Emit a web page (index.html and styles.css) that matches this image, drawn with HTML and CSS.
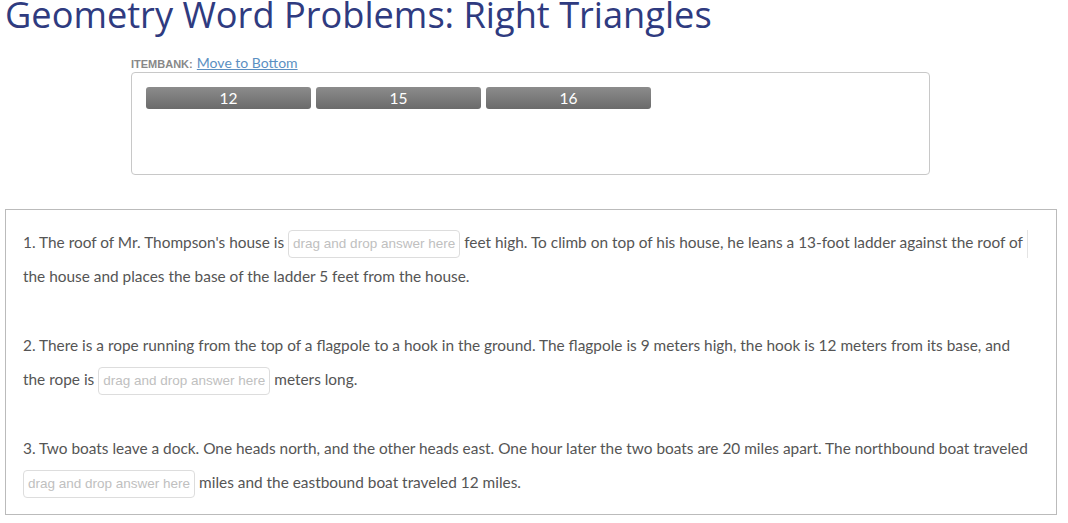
FILE: index.html
```html
<!DOCTYPE html>
<html>
<head>
<meta charset="utf-8">
<link rel="stylesheet" href="styles.css">
</head>
<body>
<h1 class="title">Geometry Word Problems: Right Triangles</h1>
<div class="bank">
  <div class="bank-head"><span class="bank-label">ITEMBANK:</span> <a class="bank-link" href="#">Move to Bottom</a></div>
  <div class="bank-box">
    <div class="chip">12</div>
    <div class="chip">15</div>
    <div class="chip">16</div>
  </div>
</div>
<div class="questions">
  <p class="q">1. The roof of Mr. Thompson's house is <span class="drop">drag and drop answer here</span> feet high. To climb on top of his house, he leans a 13-foot ladder against the roof of <span class="empty"></span> the house and places the base of the ladder 5 feet from the house.</p>
  <p class="q">2. There is a rope running from the top of a flagpole to a hook in the ground. The flagpole is 9 meters high, the hook is 12 meters from its base, and the rope is <span class="drop">drag and drop answer here</span> meters long.</p>
  <p class="q">3. Two boats leave a dock. One heads north, and the other heads east. One hour later the two boats are 20 miles apart. The northbound boat traveled <span class="drop">drag and drop answer here</span> miles and the eastbound boat traveled 12 miles.</p>
</div>
</body>
</html>
```
FILE: styles.css
```css
html, body { margin: 0; padding: 0; background: #fff; }
body { font-family: Lato, "Noto Sans", sans-serif; color: #555; }
.title {
  margin: -4px 0 0;
  padding-left: 5px;
  font-family: "Open Sans", "Noto Sans", sans-serif;
  font-weight: 400;
  font-size: 36.2px;
  line-height: 36px;
  height: 54px;
  color: #2f3b80;
}
.bank { margin-left: 131px; width: 799px; }
.bank-head { height: 22px; line-height: 24px; }
.bank-label { font-family: "Liberation Sans", Arial, sans-serif; font-weight: 700; font-size: 11px; color: #888; }
.bank-link { font-family: Lato, sans-serif; font-size: 14px; color: #5b8fc2; text-decoration: underline; }
.bank-box {
  border: 1px solid #c8c8c8;
  border-radius: 4px;
  height: 87px;
  padding: 14px 14px 0;
  display: flex;
  gap: 5px;
  align-items: flex-start;
}
.chip {
  width: 165px;
  height: 22px;
  border-radius: 3px;
  background: linear-gradient(#8c8c8c, #6b6b6b);
  color: #fff;
  font-family: Lato, sans-serif;
  font-size: 15.5px;
  line-height: 22px;
  text-align: center;
}
.questions {
  margin: 34px 0 0 5px;
  width: 1052px;
  box-sizing: border-box;
  border: 1px solid #bbb;
  padding: 15px 22px 0 17px;
  height: 306px;
}
.q { margin: 0 0 35px; font-family: Lato, sans-serif; font-size: 15.4px; line-height: 34px; }
.drop {
  display: inline-block;
  box-sizing: border-box;
  height: 28px;
  line-height: 26px;
  padding: 0 4px;
  border: 1px solid #ddd;
  border-radius: 4px;
  font-family: "Liberation Sans", Arial, sans-serif;
  font-size: 13.5px;
  color: #c0c0c0;
  vertical-align: middle;
}
.empty { display: inline-block; height: 28px; border-left: 1px solid #e4e4e4; vertical-align: middle; }
```
